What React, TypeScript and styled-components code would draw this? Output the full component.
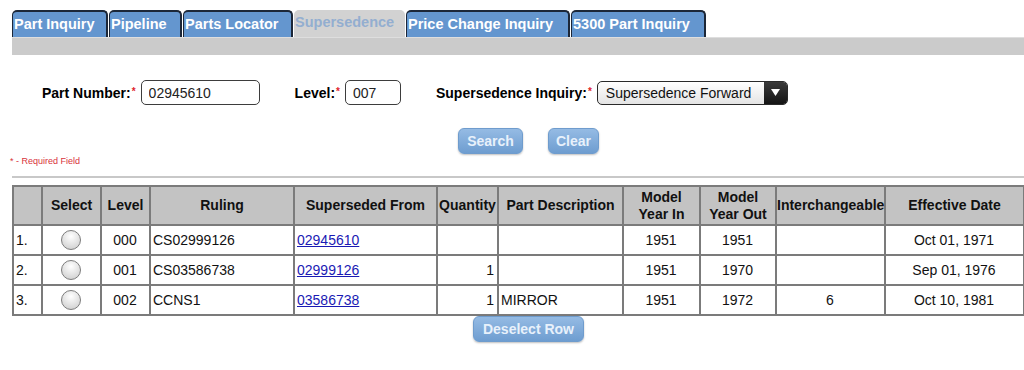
import styled, { createGlobalStyle } from "styled-components";

const GlobalStyle = createGlobalStyle`
  body {
    margin: 0;
    background: #ffffff;
    font-family: "Liberation Sans", Arial, sans-serif;
    color: #000;
  }
`;

type Row = {
  level: string;
  ruling: string;
  from: string;
  qty: string;
  desc: string;
  yearIn: string;
  yearOut: string;
  inter: string;
  date: string;
};

const rows: Row[] = [
  { level: "000", ruling: "CS02999126", from: "02945610", qty: "", desc: "", yearIn: "1951", yearOut: "1951", inter: "", date: "Oct 01, 1971" },
  { level: "001", ruling: "CS03586738", from: "02999126", qty: "1", desc: "", yearIn: "1951", yearOut: "1970", inter: "", date: "Sep 01, 1976" },
  { level: "002", ruling: "CCNS1", from: "03586738", qty: "1", desc: "MIRROR", yearIn: "1951", yearOut: "1972", inter: "6", date: "Oct 10, 1981" },
];

const tabs = [
  { label: "Part Inquiry", width: 96 },
  { label: "Pipeline", width: 73 },
  { label: "Parts Locator", width: 110 },
  { label: "Supersedence", width: 111, active: true },
  { label: "Price Change Inquiry", width: 164 },
  { label: "5300 Part Inquiry", width: 135 },
];

const colWidths = [29, 59, 49, 144, 143, 61, 125, 77, 76, 109, 139];

export default function App() {
  return (
    <Page>
      <GlobalStyle />
      <TabBar>
        {tabs.map((t) => (
          <Tab key={t.label} $active={!!t.active} style={{ width: t.width }}>
            {t.label}
          </Tab>
        ))}
      </TabBar>
      <GrayBar />

      <FormRow>
        <Field>
          <Label>
            Part Number:<Req>*</Req>
          </Label>
          <TextBox $w={119} defaultValue="02945610" />
        </Field>
        <Field>
          <Label>
            Level:<Req>*</Req>
          </Label>
          <TextBox $w={56} defaultValue="007" />
        </Field>
        <Field>
          <Label>
            Supersedence Inquiry:<Req>*</Req>
          </Label>
          <Select>
            <SelectText>Supersedence Forward</SelectText>
            <SelectArrow>
              <svg width="9" height="7" viewBox="0 0 9 7">
                <path d="M0 0 H9 L4.5 7 Z" fill="#fff" />
              </svg>
            </SelectArrow>
          </Select>
        </Field>
      </FormRow>

      <ButtonRow>
        <BlueButton $w={65}>Search</BlueButton>
        <BlueButton $w={51}>Clear</BlueButton>
      </ButtonRow>

      <RequiredNote>* - Required Field</RequiredNote>
      <Divider />

      <Table>
        <colgroup>
          {colWidths.map((w, i) => (
            <col key={i} style={{ width: w }} />
          ))}
        </colgroup>
        <thead>
          <tr>
            <Th></Th>
            <Th>Select</Th>
            <Th>Level</Th>
            <Th>Ruling</Th>
            <Th>Superseded From</Th>
            <Th>Quantity</Th>
            <Th>Part Description</Th>
            <Th>
              Model
              <br />
              Year In
            </Th>
            <Th>
              Model
              <br />
              Year Out
            </Th>
            <Th>Interchangeable</Th>
            <Th>Effective Date</Th>
          </tr>
        </thead>
        <tbody>
          {rows.map((r, i) => (
            <tr key={r.level}>
              <Td $align="left">{i + 1}.</Td>
              <Td>
                <Radio />
              </Td>
              <Td>{r.level}</Td>
              <Td $align="left">{r.ruling}</Td>
              <Td $align="left">
                <PartLink href="#">{r.from}</PartLink>
              </Td>
              <Td $align="right">{r.qty}</Td>
              <Td $align="left">{r.desc}</Td>
              <Td>{r.yearIn}</Td>
              <Td>{r.yearOut}</Td>
              <Td>{r.inter}</Td>
              <Td>{r.date}</Td>
            </tr>
          ))}
        </tbody>
      </Table>

      <DeselectRow>
        <BlueButton $w={111}>Deselect Row</BlueButton>
      </DeselectRow>
    </Page>
  );
}

const Page = styled.div`
  width: 1024px;
  height: 370px;
  overflow: hidden;
`;

const TabBar = styled.div`
  display: flex;
  padding: 10px 0 0 12px;
  height: 27px;
  gap: 1px;
`;

const Tab = styled.div<{ $active: boolean }>`
  box-sizing: border-box;
  height: 27px;
  padding: 4px 0 0 1px;
  font-size: 14.5px;
  font-weight: bold;
  white-space: nowrap;
  color: ${(p) => (p.$active ? "#93aed0" : "#ffffff")};
  background: ${(p) => (p.$active ? "#d2d2d2" : "#6496cf")};
  border: ${(p) => (p.$active ? "none" : "2px solid #1c2738")};
  border-bottom: none;
  border-left-width: ${(p) => (p.$active ? "0" : "1px")};
  border-radius: 5px 5px 0 0;
`;

const GrayBar = styled.div`
  margin-left: 12px;
  height: 17px;
  background: #cbcbcb;
  border-top: 1px solid #dedede;
`;

const FormRow = styled.div`
  display: flex;
  align-items: center;
  gap: 35px;
  padding: 25px 0 0 42px;
`;

const Field = styled.div`
  display: flex;
  align-items: center;
  gap: 5px;
`;

const Label = styled.span`
  font-size: 14px;
  font-weight: bold;
  white-space: nowrap;
`;

const Req = styled.sup`
  margin-left: 1px;
  color: #e0242c;
  font-size: 10px;
  vertical-align: 3px;
`;

const TextBox = styled.input<{ $w: number }>`
  box-sizing: border-box;
  width: ${(p) => p.$w}px;
  height: 25px;
  border: 1px solid #3d3d3d;
  border-radius: 5px;
  padding: 0 7px;
  font-family: "Liberation Sans", Arial, sans-serif;
  font-size: 14px;
  color: #222;
  outline: none;
`;

const Select = styled.div`
  box-sizing: border-box;
  display: flex;
  width: 191px;
  height: 24px;
  border: 1px solid #2a2a2a;
  border-radius: 5px;
  overflow: hidden;
  background: linear-gradient(#ffffff, #e4e4e4);
`;

const SelectText = styled.span`
  flex: 1;
  padding: 3px 0 0 8px;
  font-size: 14px;
  color: #111;
  white-space: nowrap;
`;

const SelectArrow = styled.span`
  width: 23px;
  display: flex;
  align-items: center;
  justify-content: center;
  background: linear-gradient(#3a3a3a, #141414);
`;

const ButtonRow = styled.div`
  display: flex;
  gap: 25px;
  padding: 23px 0 0 458px;
`;

const BlueButton = styled.button<{ $w: number }>`
  box-sizing: border-box;
  width: ${(p) => p.$w}px;
  height: 26px;
  padding: 0;
  border: 1px solid #6f9ccd;
  border-radius: 6px;
  background: linear-gradient(#95bbe4, #6e9dd0);
  box-shadow: 0 1px 2px rgba(0, 0, 0, 0.25);
  color: #e8f1fb;
  font-family: "Liberation Sans", Arial, sans-serif;
  font-size: 14px;
  font-weight: bold;
`;

const RequiredNote = styled.div`
  padding: 2px 0 0 10px;
  font-size: 9px;
  color: #d8323a;
  height: 12px;
`;

const Divider = styled.div`
  margin: 8px 0 0 12px;
  height: 2px;
  background: #c8c8c8;
`;

const Table = styled.table`
  margin: 7px 0 0 12px;
  width: 1011px;
  border-collapse: collapse;
  border: 2px solid #7b7b7b;
  font-size: 14px;
  table-layout: fixed;
`;

const Th = styled.th`
  height: 37px;
  padding: 0;
  background: #c3c3c3;
  border: 2px solid #7b7b7b;
  font-weight: bold;
  font-size: 14px;
  line-height: 17px;
  color: #111;
  white-space: nowrap;
`;

const Td = styled.td<{ $align?: "left" | "right" | "center" }>`
  height: 28px;
  padding: 0 3px 0 2px;
  border: 2px solid #7b7b7b;
  text-align: ${(p) => p.$align || "center"};
  color: #111;
  white-space: nowrap;
`;

const Radio = styled.span`
  display: inline-block;
  width: 18px;
  height: 18px;
  border-radius: 50%;
  border: 1px solid #7d7d7d;
  background: radial-gradient(circle at 50% 30%, #ffffff, #d4d4d4 80%);
  vertical-align: middle;
`;

const PartLink = styled.a`
  color: #1a1ab4;
  text-decoration: underline;
`;

const DeselectRow = styled.div`
  display: flex;
  padding: 0 0 0 473px;
`;
